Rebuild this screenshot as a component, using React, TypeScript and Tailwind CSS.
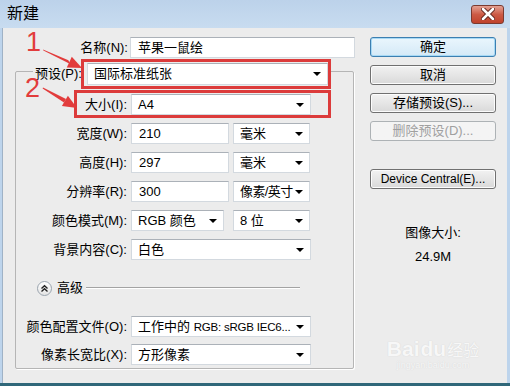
import React from 'react';

const FONT = "font-['Liberation_Sans','Noto_Sans_CJK_SC',sans-serif]";

const Caret = () => (
  <span className="shrink-0 w-0 h-0 border-l-[4px] border-r-[4px] border-t-[4px] border-l-transparent border-r-transparent border-t-black" />
);

const Field = ({ value, className = '' }: { value: string; className?: string }) => (
  <div className={`h-[21px] bg-white border border-[#d3d9df] border-t-[#abb1b8] flex items-center px-[7px] ${className}`}>
    {value}
  </div>
);

const Select = ({ value, className = '' }: { value: React.ReactNode; className?: string }) => (
  <div className={`h-[21px] bg-white border border-[#d3d9df] border-t-[#abb1b8] flex items-center pl-[6px] pr-[6px] ${className}`}>
    <span className="flex-1 whitespace-nowrap">{value}</span>
    <Caret />
  </div>
);

const Row = ({ label, children }: { label: string; children: React.ReactNode }) => (
  <div className="flex items-center h-[21px]">
    <div className="w-[115px] text-right pr-[4px] whitespace-nowrap">{label}</div>
    {children}
  </div>
);

const Button = ({ label, primary, disabled }: { label: string; primary?: boolean; disabled?: boolean }) => (
  <div
    className={`h-[20px] rounded-[3px] border flex items-center justify-center bg-gradient-to-b ${
      primary
        ? 'border-[#3c7fb1] from-[#eaf6fd] to-[#d4e9f7] shadow-[inset_0_0_0_1px_#a7d9f5]'
        : disabled
        ? 'border-[#adb2b5] from-[#f4f4f4] to-[#f4f4f4] text-[#a0a0a0]'
        : 'border-[#707070] from-[#f2f2f2] to-[#d9d9d9] shadow-[inset_0_0_0_1px_#fcfcfc]'
    }`}
  >
    {label}
  </div>
);

export default function App() {
  return (
    <div className={`relative w-[510px] h-[386px] bg-[#bdd4ec] flex flex-col text-[13px] text-black ${FONT}`}>
      {/* Title bar */}
      <div className="h-[28px] flex items-center justify-between pl-[7px] pr-[6px] bg-gradient-to-b from-[#bcd2ea] to-[#c8dcf0]">
        <span className="text-[16px] leading-none">新建</span>
        <div className="w-[33px] h-[19px] rounded-[3px] border border-[#7a3a30] bg-gradient-to-b from-[#e3a193] via-[#cc5a45] to-[#c0422b] flex items-center justify-center">
          <svg width="14" height="12" viewBox="0 0 14 12">
            <path d="M2 1 L12 11 M12 1 L2 11" stroke="#5a2018" strokeWidth="4.5" strokeLinecap="round" />
            <path d="M2 1 L12 11 M12 1 L2 11" stroke="#ffffff" strokeWidth="2.6" strokeLinecap="round" />
          </svg>
        </div>
      </div>

      {/* Body */}
      <div className="flex-1 ml-[2px] mr-[3px] bg-[#ececec] border-l border-[#9fb2c6] flex">
        {/* Left column */}
        <div className="w-[367px]">
          <div className="mt-[9px] flex items-center h-[21px]">
            <div className="w-[127px] text-right pr-[2px]">名称(N):</div>
            <Field value="苹果一鼠绘" className="w-[225px] border-[#b9c3cc]" />
          </div>

          {/* Group box */}
          <div className="mt-[13px] ml-[12px] w-[339px] h-[298px] border border-[#b5b5b5] rounded-[2px] shadow-[1px_1px_0_#ffffff]">
            <div className="-mt-[9px] flex items-center h-[22px]">
              <div className="ml-[17px] pl-[2px] pr-[5px] bg-[#ececec]">预设(P):</div>
              <Select value="国际标准纸张" className="h-[22px] w-[241px]" />
            </div>
            <div className="mt-[9px] flex flex-col gap-[8px]">
              <Row label="大小(I):">
                <Select value="A4" className="w-[180px]" />
              </Row>
              <Row label="宽度(W):">
                <Field value="210" className="w-[98px]" />
                <Select value="毫米" className="ml-[4px] w-[77px]" />
              </Row>
              <Row label="高度(H):">
                <Field value="297" className="w-[98px]" />
                <Select value="毫米" className="ml-[4px] w-[77px]" />
              </Row>
              <Row label="分辨率(R):">
                <Field value="300" className="w-[98px]" />
                <Select value={<span className="tracking-[-0.6px]">像素/英寸</span>} className="ml-[4px] w-[77px] pl-[5px] pr-[5px]" />
              </Row>
              <Row label="颜色模式(M):">
                <Select value="RGB 颜色" className="w-[93px]" />
                <Select value="8 位" className="ml-[9px] w-[77px]" />
              </Row>
              <Row label="背景内容(C):">
                <Select value="白色" className="w-[180px]" />
              </Row>
            </div>

            {/* Advanced */}
            <div className="mt-[20px] flex items-center h-[16px] pl-[21px]">
              <div className="w-[15px] h-[15px] rounded-full border border-[#9aa4ae] bg-gradient-to-b from-white to-[#e4e4e4] flex items-center justify-center">
                <svg width="9" height="9" viewBox="0 0 9 9">
                  <path d="M1.5 4.5 L4.5 1.8 L7.5 4.5 M1.5 7.5 L4.5 4.8 L7.5 7.5" fill="none" stroke="#222" strokeWidth="1.4" />
                </svg>
              </div>
              <span className="ml-[5px]">高级</span>
              <svg className="ml-[3px]" width="214" height="2" viewBox="0 0 214 2">
                <rect x="0" y="0" width="214" height="1" fill="#a3a3a3" />
                <rect x="0" y="1" width="214" height="1" fill="#ffffff" />
              </svg>
            </div>

            <div className="mt-[20px] flex flex-col gap-[7px]">
              <Row label="颜色配置文件(O):">
                <Select
                  value={
                    <span>
                      工作中的 <span className="text-[11.5px] tracking-[-0.2px]">RGB: sRGB IEC6...</span>
                    </span>
                  }
                  className="w-[180px]"
                />
              </Row>
              <Row label="像素长宽比(X):">
                <Select value="方形像素" className="w-[180px]" />
              </Row>
            </div>
          </div>
        </div>

        {/* Right column */}
        <div className="w-[126px] pt-[9px] flex flex-col">
          <Button label="确定" primary />
          <div className="mt-[8px]"><Button label="取消" /></div>
          <div className="mt-[8px]"><Button label="存储预设(S)..." /></div>
          <div className="mt-[8px]"><Button label="删除预设(D)..." disabled /></div>
          <div className="mt-[28px] text-[12px]"><Button label="Device Central(E)..." /></div>
          <div className="mt-[34px] text-center">图像大小:</div>
          <div className="mt-[4px] text-center">24.9M</div>
          <div className="mt-[72px] text-center leading-none opacity-60">
            <div className="text-[21px] font-bold text-white [text-shadow:0_0_1px_#bdbdbd]">
              Bai<span className="mx-[1px]">du</span><span className="text-[16px] font-normal">经验</span>
            </div>
            <div className="mt-[2px] text-[9px] text-white [text-shadow:0_0_1px_#bdbdbd]">jingyan.baidu.com</div>
          </div>
        </div>
      </div>
      <div className="h-[3px] bg-[#2f6779]" />

      {/* Annotations */}
      <div className="absolute left-[81px] top-[59px] w-[250px] h-[30px] border-[3px] border-[#dc3b3b]" />
      <div className="absolute left-[74px] top-[90px] w-[257px] h-[28px] border-[3px] border-[#dc3b3b]" />
      <div className="absolute left-[26px] top-[29px] text-[27px] leading-none text-[#e23c3c] font-['Liberation_Sans',sans-serif]">1</div>
      <div className="absolute left-[25px] top-[75px] text-[27px] leading-none text-[#e23c3c] font-['Liberation_Sans',sans-serif]">2</div>
      <svg className="absolute left-0 top-0" width="510" height="386" viewBox="0 0 510 386">
        <polygon points="43,49.5 43.4,50.5 70.2,64 68.4,60.2" fill="#e23c3c" />
        <polygon points="82,68 66.8,67.5 71.8,56.7" fill="#e23c3c" />
        <polygon points="43,87.5 42.6,88.5 64,102.5 66,99" fill="#e23c3c" />
        <polygon points="77,108 61.9,106.1 67.9,95.7" fill="#e23c3c" />
      </svg>
    </div>
  );
}
